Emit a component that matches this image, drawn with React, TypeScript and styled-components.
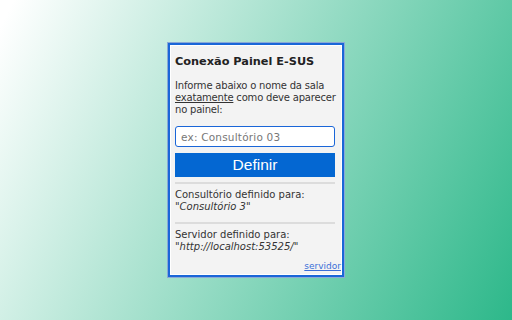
import React from "react";
import styled, { createGlobalStyle } from "styled-components";

const Global = createGlobalStyle`
  html, body { margin: 0; padding: 0; width: 512px; height: 320px; overflow: hidden; }
  body { font-family: "DejaVu Sans", Verdana, sans-serif; }
`;

const Page = styled.div`
  width: 512px;
  height: 320px;
  background: linear-gradient(116deg, #ffffff 2%, #2db88a 100%);
  display: flex;
  align-items: flex-start;
  justify-content: center;
  padding-top: 43px;
  box-sizing: border-box;
`;

const Panel = styled.div`
  width: 176px;
  height: 234px;
  box-sizing: border-box;
  border: 2px solid #1a66d8;
  box-shadow: inset 0 0 0 1px #ffffff, 0 0 0 1px #8aa9d6;
  background: #f3f3f3;
  padding: 9px 7px 0 5px;
  display: flex;
  flex-direction: column;
  position: relative;
`;

const Title = styled.h1`
  margin: 0;
  font-size: 11.3px;
  font-weight: bold;
  white-space: nowrap;
  color: #222;
  line-height: 16px;
`;

const Text = styled.p`
  margin: 0;
  font-size: 10px;
  white-space: nowrap;
  line-height: 12px;
  color: #333;
`;

const Intro = styled(Text)`
  margin-top: 10px;
  letter-spacing: -0.2px;
`;

const Under = styled.span`
  text-decoration: underline;
`;

const Input = styled.input`
  margin-top: 10px;
  height: 21px;
  box-sizing: border-box;
  border: 1.5px solid #1a66d8;
  border-radius: 3px;
  background: #fff;
  padding: 0 5px;
  font-family: "DejaVu Sans", sans-serif;
  font-size: 10.5px;
  letter-spacing: 0.2px;
  outline: none;
  &::placeholder { color: #777; }
`;

const Button = styled.button`
  margin-top: 6px;
  height: 24px;
  border: none;
  background: #0467d2;
  color: #fff;
  font-family: "Liberation Sans", Arial, sans-serif;
  font-size: 15.5px;
  padding: 0;
`;

const Rule = styled.div`
  height: 2px;
  background: #dcdcdc;
  margin: 5px 0;
`;

const Info = styled(Text)<{ $after?: number }>`
  margin-bottom: ${(p) => p.$after ?? 0}px;
`;

const Quote = styled.span`
  font-style: italic;
`;

const Link = styled.a`
  position: absolute;
  right: 1px;
  bottom: 4px;
  font-size: 9px;
  color: #3a6fd8;
  text-decoration: underline;
`;

export default function App() {
  return (
    <>
      <Global />
      <Page>
        <Panel>
          <Title>Conexão Painel E-SUS</Title>
          <Intro>
            Informe abaixo o nome da sala
            <br />
            <Under>exatamente</Under> como deve aparecer
            <br />
            no painel:
          </Intro>
          <Input placeholder="ex: Consultório 03" />
          <Button>Definir</Button>
          <Rule />
          <Info $after={4}>
            Consultório definido para:
            <br />
            <Quote>"Consultório 3"</Quote>
          </Info>
          <Rule />
          <Info>
            Servidor definido para:
            <br />
            <Quote>"http://localhost:53525/"</Quote>
          </Info>
          <Link href="#">servidor</Link>
        </Panel>
      </Page>
    </>
  );
}
